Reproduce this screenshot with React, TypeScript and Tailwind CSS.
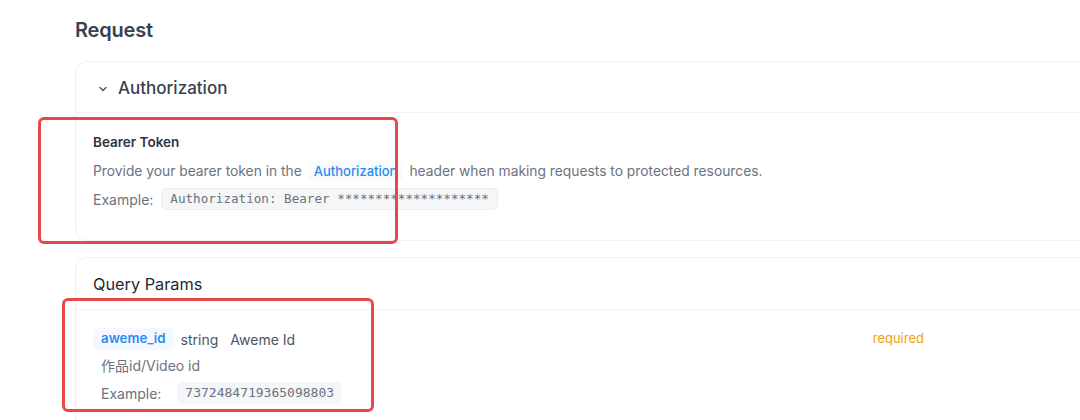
import React from "react";

export default function App() {
  const font = { fontFamily: "Inter, 'Noto Sans CJK SC', sans-serif" };
  return (
    <div className="relative w-[1080px] h-[420px] overflow-hidden bg-white" style={font}>
      <div className="pl-[75px] pt-[17px] w-[1140px]">
        <h2 className="text-[20px] leading-[26px] font-semibold text-[#374151] tracking-[-0.2px]">Request</h2>

        <div className="mt-[18px] rounded-[12px] border border-[#f0f1f3]">
          <div className="h-[51px] pt-[3px] flex items-center pl-[22px] gap-[10px] border-b border-[#f0f1f3]">
            <svg width="10" height="10" viewBox="0 0 10 10" fill="none" stroke="#4b5563" strokeWidth="1.4" strokeLinecap="round" strokeLinejoin="round">
              <path d="M2 3.5 L5 6.5 L8 3.5" />
            </svg>
            <span className="text-[17px] font-medium text-[#374151]">Authorization</span>
          </div>
          <div className="pl-[17px] pt-[19px] pb-[30px]">
            <div className="text-[13.5px] leading-[20px] font-semibold text-[#2d3440]">Bearer Token</div>
            <div className="mt-[9px] text-[13.8px] leading-[20px] text-[#6b7280] flex items-center">
              <span>Provide your bearer token in the</span>
              <span className="mx-[6px] px-[6px] rounded-[5px] bg-[#f8fafc] text-[13px] font-medium text-[#2b8cf0]">Authorization</span>
              <span>header when making requests to protected resources.</span>
            </div>
            <div className="mt-[7px] flex items-center text-[14px] text-[#6b7280]">
              <span>Example:</span>
              <span
                className="ml-[8px] px-[8px] h-[22px] flex items-center rounded-[5px] bg-[#f5f6f7] border border-[#eceef0] text-[12.6px] text-[#6b7280]"
                style={{ fontFamily: "'DejaVu Sans Mono', 'Liberation Mono', monospace" }}
              >
                Authorization: Bearer ********************
              </span>
            </div>
          </div>
        </div>

        <div className="mt-[16px] rounded-[12px] border border-[#f0f1f3] h-[200px]">
          <div className="h-[52px] pt-[2px] flex items-center pl-[17px] border-b border-[#f0f1f3]">
            <span className="text-[16.3px] text-[#1f2937]">Query Params</span>
          </div>
          <div className="pl-[17px] pt-[18px]">
            <div className="flex items-center h-[22px] text-[14px]">
              <span className="px-[8px] h-[22px] flex items-center rounded-[5px] bg-[#f5f9ff] text-[13.3px] font-semibold text-[#2b8cf0]">aweme_id</span>
              <span className="ml-[7px] text-[#4b5563]">string</span>
              <span className="ml-[12px] text-[#4b5563]">Aweme Id</span>
              <span className="ml-auto mr-[215px] text-[13px] text-[#f59e0b]">required</span>
            </div>
            <div className="mt-[6px] pl-[8px] text-[14px] leading-[20px] text-[#6b7280]">作品id/Video id</div>
            <div className="mt-[6px] pl-[8px] flex items-center text-[14px] text-[#6b7280]">
              <span>Example:</span>
              <span
                className="ml-[16px] px-[8px] h-[22px] flex items-center rounded-[5px] bg-[#f5f6f7] text-[13px] text-[#6b7280]"
                style={{ fontFamily: "'DejaVu Sans Mono', 'Liberation Mono', monospace" }}
              >
                7372484719365098803
              </span>
            </div>
          </div>
        </div>
      </div>

      <div className="absolute left-[38px] top-[117px] w-[360px] h-[127px] rounded-[6px] border-[3px] border-[#e8484a]" />
      <div className="absolute left-[62px] top-[298px] w-[312px] h-[114px] rounded-[6px] border-[3px] border-[#e8484a]" />
    </div>
  );
}
